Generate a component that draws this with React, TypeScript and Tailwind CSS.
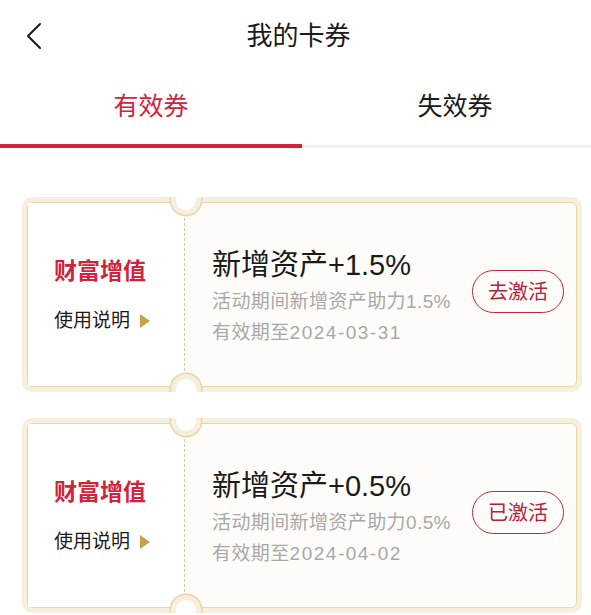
import React from 'react';

type Coupon = {
  title: string;
  desc: string;
  expire: string;
  action: string;
};

const coupons: Coupon[] = [
  { title: '新增资产+1.5%', desc: '活动期间新增资产助力1.5%', expire: '2024-03-31', action: '去激活' },
  { title: '新增资产+0.5%', desc: '活动期间新增资产助力0.5%', expire: '2024-04-02', action: '已激活' },
];

function CouponCard({ c }: { c: Coupon }) {
  return (
    <div className="relative ml-[22px] w-[560px] h-[195px] rounded-[10px] bg-[#f7eedc] p-[5px] overflow-hidden">
      <div className="flex h-full rounded-[6px] border-[1.5px] border-[#e7d5ad] bg-[#fdfcf9]">
        <div className="flex w-[157px] flex-col justify-center bg-white pl-[26px] border-r border-dashed border-[#d9c9a3]">
          <div className="text-[23px] leading-[30px] font-bold text-[#d0243b]">财富增值</div>
          <div className="mt-[22px] flex items-center text-[19px] leading-[26px] text-[#1a1a1a]">
            使用说明
            <svg width="10" height="14" viewBox="0 0 10 14" className="ml-[10px]">
              <path d="M0 0 L10 7 L0 14 Z" fill="#c9a049" />
            </svg>
          </div>
        </div>
        <div className="flex flex-1 items-center">
          <div className="flex flex-1 flex-col justify-center pl-[27px] pt-[8px]">
            <div className="text-[29px] leading-[32px] text-[#1a1a1a]">{c.title}</div>
            <div className="mt-[5px] text-[19px] leading-[31px] tracking-[0.4px] text-[#a8a8a8]">{c.desc}</div>
            <div className="text-[19px] leading-[31px] tracking-[0.4px] text-[#a8a8a8]">
              有效期至<span className="tracking-[1.5px]">{c.expire}</span>
            </div>
          </div>
          <button className="mr-[12px] mb-[6px] flex h-[43px] w-[92px] items-center justify-center rounded-full border-[1.5px] border-[#b8283f] text-[20px] text-[#b5223c]">
            {c.action}
          </button>
        </div>
      </div>
      <div className="absolute left-[149px] top-[-12px] h-[30px] w-[30px] rounded-full border-[5px] border-[#f7eedc] bg-white shadow-[0_0_0_1.5px_#e7d5ad]" />
      <div className="absolute left-[149px] bottom-[-12px] h-[30px] w-[30px] rounded-full border-[5px] border-[#f7eedc] bg-white shadow-[0_0_0_1.5px_#e7d5ad]" />
    </div>
  );
}

export default function App() {
  return (
    <div
      className="min-h-screen w-[591px] bg-white"
      style={{ fontFamily: '"Liberation Sans", "Noto Sans CJK SC", sans-serif' }}
    >
      <div className="relative flex h-[72px] items-center justify-center">
        <svg width="20" height="28" viewBox="0 0 20 28" className="absolute left-[24px] top-[22px]">
          <path d="M16 2 L4 14 L16 26" fill="none" stroke="#1a1a1a" strokeWidth="2" strokeLinecap="round" strokeLinejoin="round" />
        </svg>
        <div className="pl-[6px] text-[26px] text-[#1a1a1a]">我的卡券</div>
      </div>
      <div className="grid grid-cols-[302px_1fr]">
        <div className="flex flex-col items-center">
          <div className="h-[72px] pt-[17px] text-[25px] leading-[34px] text-[#d0243b]">有效券</div>
          <div className="h-[4px] w-full bg-[#d0243b]" />
        </div>
        <div className="flex flex-col">
          <div className="h-[72px] pt-[17px] pl-[17px] text-center text-[25px] leading-[34px] text-[#1a1a1a]">失效券</div>
          <div className="mt-[1px] h-[3px] w-full bg-[#f2f2f2]" />
        </div>
      </div>
      <div className="flex flex-col gap-[26px] pt-[49px]">
        {coupons.map((c) => (
          <CouponCard key={c.action} c={c} />
        ))}
      </div>
    </div>
  );
}
